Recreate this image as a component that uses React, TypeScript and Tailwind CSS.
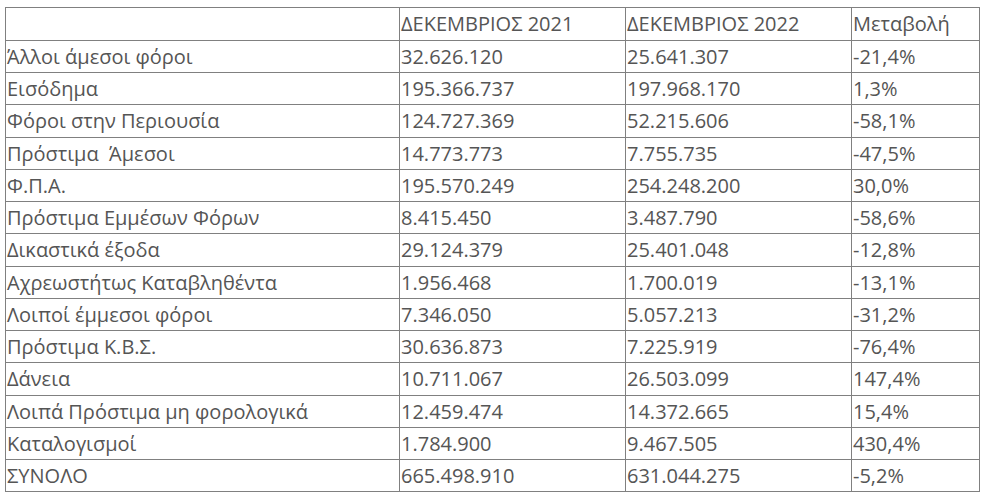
import React from "react";

const rows: [string, string, string, string][] = [
  ["", "ΔΕΚΕΜΒΡΙΟΣ 2021", "ΔΕΚΕΜΒΡΙΟΣ 2022", "Μεταβολή"],
  ["Άλλοι άμεσοι φόροι", "32.626.120", "25.641.307", "-21,4%"],
  ["Εισόδημα", "195.366.737", "197.968.170", "1,3%"],
  ["Φόροι στην Περιουσία", "124.727.369", "52.215.606", "-58,1%"],
  ["Πρόστιμα  Άμεσοι", "14.773.773", "7.755.735", "-47,5%"],
  ["Φ.Π.Α.", "195.570.249", "254.248.200", "30,0%"],
  ["Πρόστιμα Εμμέσων Φόρων", "8.415.450", "3.487.790", "-58,6%"],
  ["Δικαστικά έξοδα", "29.124.379", "25.401.048", "-12,8%"],
  ["Αχρεωστήτως Καταβληθέντα", "1.956.468", "1.700.019", "-13,1%"],
  ["Λοιποί έμμεσοι φόροι", "7.346.050", "5.057.213", "-31,2%"],
  ["Πρόστιμα Κ.Β.Σ.", "30.636.873", "7.225.919", "-76,4%"],
  ["Δάνεια", "10.711.067", "26.503.099", "147,4%"],
  ["Λοιπά Πρόστιμα μη φορολογικά", "12.459.474", "14.372.665", "15,4%"],
  ["Καταλογισμοί", "1.784.900", "9.467.505", "430,4%"],
  ["ΣΥΝΟΛΟ", "665.498.910", "631.044.275", "-5,2%"],
];

const heights = [
  "h-[33px]", "h-[32px]", "h-[32px]", "h-[33px]", "h-[32px]",
  "h-[32px]", "h-[32px]", "h-[33px]", "h-[32px]", "h-[32px]",
  "h-[32px]", "h-[33px]", "h-[32px]", "h-[32px]", "h-[31px]",
];

export default function App() {
  return (
    <div className="w-[988px] h-[499px] bg-white pt-[7px] pl-[5px] font-['Open_Sans',sans-serif] text-[20px] text-[#555555]">
      <div className="w-[975px] border border-[#808080]">
        {rows.map((r, i) => (
          <div
            key={i}
            className={`flex ${heights[i]} ${i < rows.length - 1 ? "border-b border-[#808080]" : ""}`}
          >
            <div className="w-[394px] shrink-0 border-r border-[#808080] pl-[1px] flex items-center whitespace-pre leading-none">
              {r[0]}
            </div>
            <div className="w-[226px] shrink-0 border-r border-[#808080] pl-[1px] flex items-center leading-none">
              {r[1]}
            </div>
            <div className="w-[226px] shrink-0 border-r border-[#808080] pl-[1px] flex items-center leading-none">
              {r[2]}
            </div>
            <div className="flex-1 pl-[1px] flex items-center leading-none">
              {r[3]}
            </div>
          </div>
        ))}
      </div>
    </div>
  );
}
